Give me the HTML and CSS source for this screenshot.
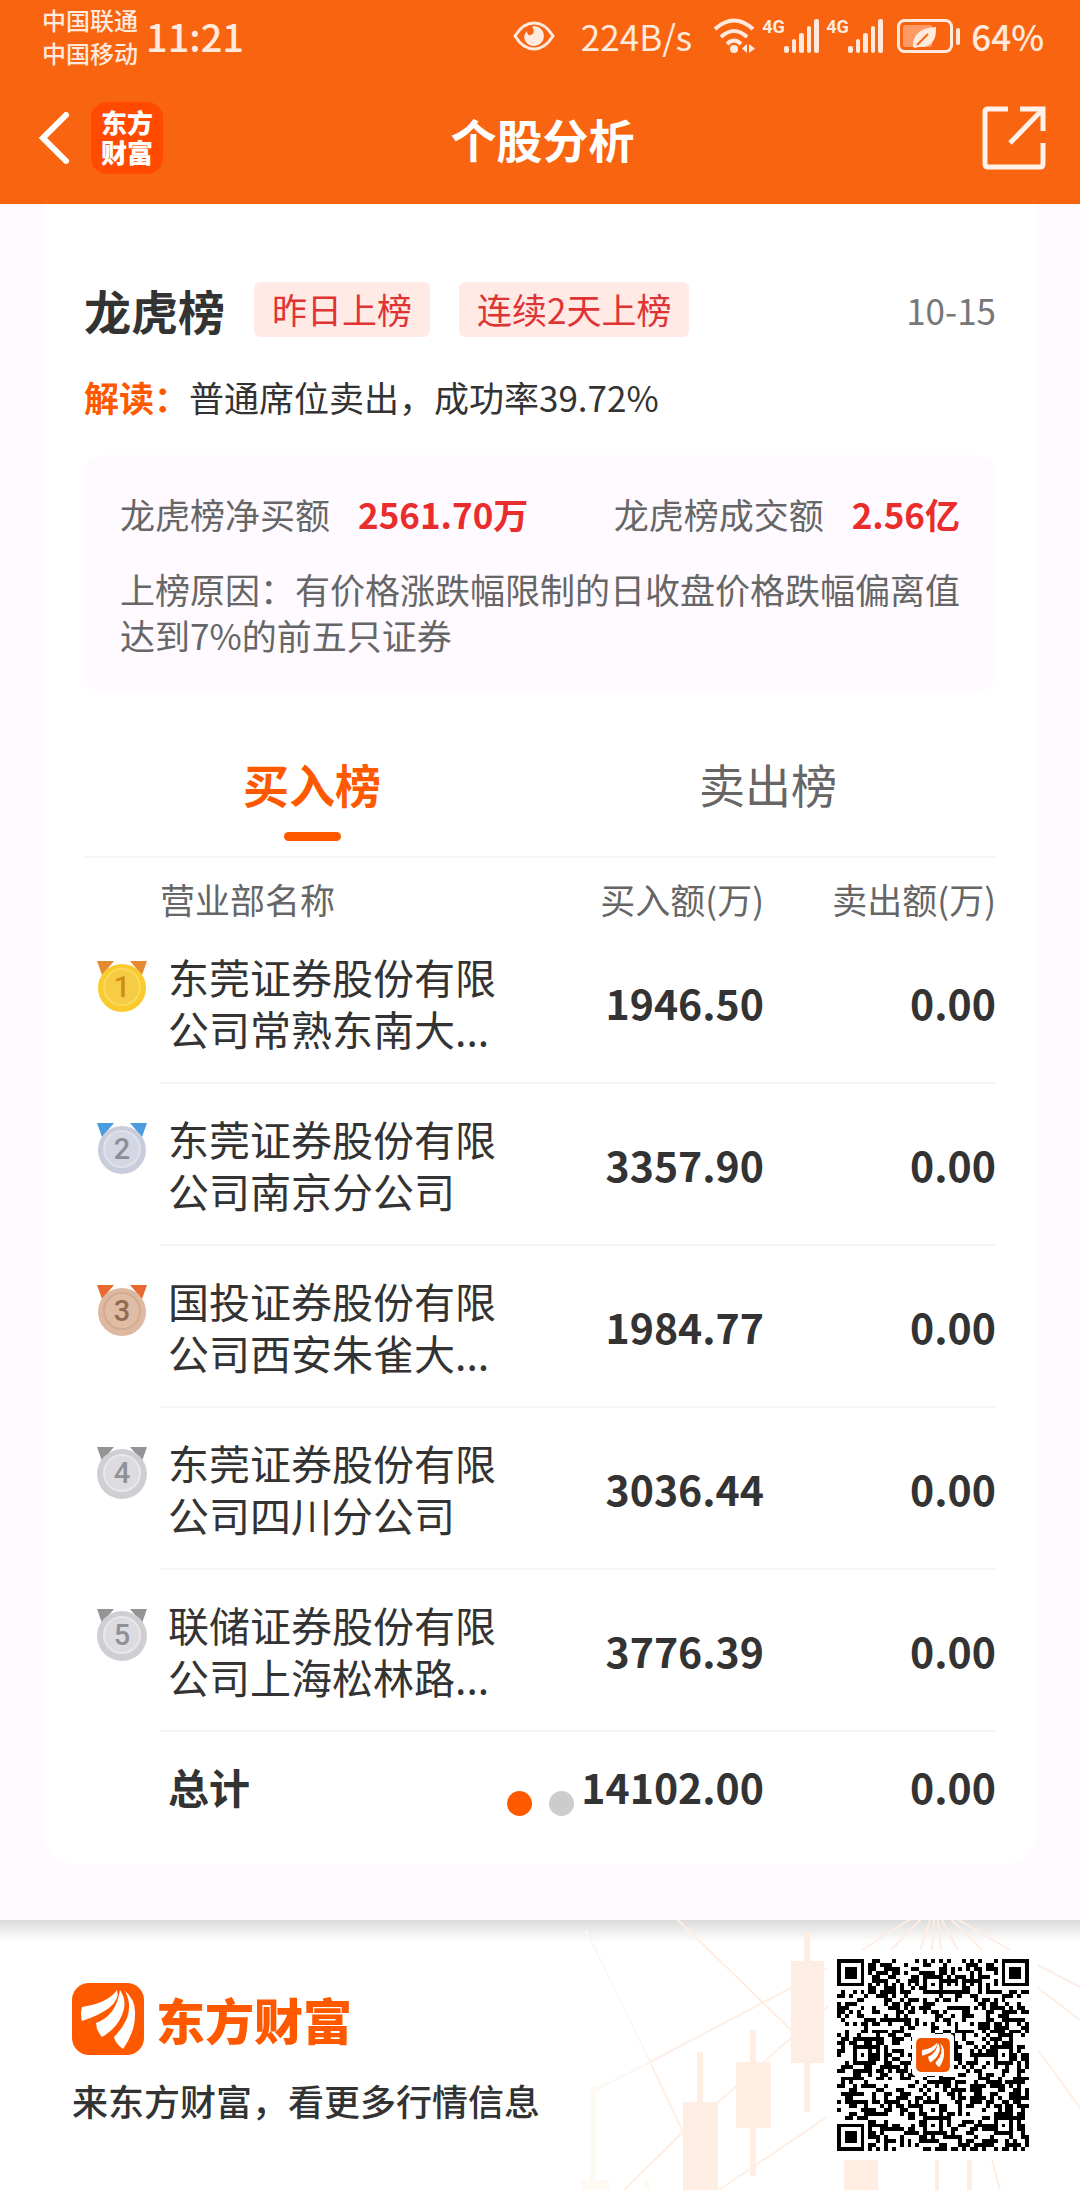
FILE: index.html
```html
<!DOCTYPE html>
<html lang="zh-CN">
  <head>
    <meta charset="UTF-8" />
    <meta name="viewport" content="width=device-width, initial-scale=1.0" />
    <title>个股分析</title>
    <link rel="stylesheet" href="styles.css">
  </head>
  <body>
    <header class="top">
      <div class="status-bar">
        <div class="carriers">
          <span>中国联通</span>
          <span>中国移动</span>
        </div>
        <span class="time">11:21</span>
        <div class="status-icons">
          <svg class="eye" width="42" height="30" viewBox="0 0 42 30">
            <path d="M2 15 Q10 2 21 2 T40 15 Q32 28 21 28 T2 15Z" fill="none" stroke="currentColor" stroke-width="3" />
            <path d="M21 5 A10 10 0 1 1 11 16 Q12 12 14 10 Q14 15 18 14 Q23 11 19 6Z" fill="currentColor" />
          </svg>
          <span class="speed">224B/s</span>
          <svg class="wifi" width="42" height="36" viewBox="0 0 42 36" fill="none" stroke="currentColor" stroke-width="4">
            <path d="M1 11 Q20 -6 39 11" />
            <path d="M7 19 Q20 7 33 19" />
            <path d="M13 26 Q20 19 27 26" />
            <circle cx="20" cy="31" r="4" fill="currentColor" stroke="none" />
            <path d="M33 26v9l-5-4.500zM35 26v9l6-4.500z" fill="currentColor" stroke="none" />
          </svg>
          <div class="signal">
            <span class="net">4G</span>
            <svg width="36" height="34" viewBox="0 0 36 34" fill="currentColor">
              <rect x="0" y="27" width="5" height="7" rx="2" />
              <rect x="8" y="20" width="4" height="14" rx="2" />
              <rect x="15" y="14" width="5" height="20" rx="2" />
              <rect x="23" y="7" width="4" height="27" rx="2" />
              <rect x="30" y="0" width="5" height="34" rx="2" />
            </svg>
          </div>
          <div class="signal">
            <span class="net">4G</span>
            <svg width="36" height="34" viewBox="0 0 36 34" fill="currentColor">
              <rect x="0" y="27" width="5" height="7" rx="2" />
              <rect x="8" y="20" width="4" height="14" rx="2" />
              <rect x="15" y="14" width="5" height="20" rx="2" />
              <rect x="23" y="7" width="4" height="27" rx="2" />
              <rect x="30" y="0" width="5" height="34" rx="2" />
            </svg>
          </div>
          <svg class="battery" width="64" height="34" viewBox="0 0 64 34">
            <rect x="1.500" y="1.500" width="53" height="31" rx="6" fill="none" stroke="currentColor" stroke-width="3" />
            <rect x="6" y="6" width="29" height="22" rx="2" fill="#ff9a66" />
            <path d="M16 27 Q16 9 39 8 Q40 29 22 28 L17 29Z" fill="currentColor" />
            <path d="M20 26 L31 15" stroke="#f96411" stroke-width="2" />
            <rect x="59" y="9" width="4" height="17" rx="2" fill="currentColor" />
          </svg>
          <span class="percent">64%</span>
        </div>
      </div>
      <div class="nav-bar">
        <div class="nav-left">
          <button class="icon-btn back" aria-label="返回">
            <svg width="30" height="52" viewBox="0 0 30 52" fill="none" stroke="#fff" stroke-width="6" stroke-linecap="round">
              <path d="M27 3 L4 26 L27 49" />
            </svg>
          </button>
          <div class="app-badge">东方财富</div>
        </div>
        <h1>个股分析</h1>
        <button class="icon-btn share" aria-label="分享">
          <svg width="64" height="64" viewBox="0 0 64 64" fill="none" stroke="#fff2ea" stroke-width="5">
            <path d="M26 3H6Q3 3 3 6V58Q3 61 6 61H58Q61 61 61 58V37" />
            <path d="M38 3H61V25M60 4L28 37" />
          </svg>
        </button>
      </div>
    </header>

    <main>
      <section class="card">
        <div class="card-title">
          <h2>龙虎榜</h2>
          <span class="tag">昨日上榜</span>
          <span class="tag">连续2天上榜</span>
          <time>10-15</time>
        </div>
        <p class="reading"><strong>解读：</strong>普通席位卖出，成功率39.72%</p>

        <div class="summary">
          <div class="amounts">
            <div>龙虎榜净买额<b>2561.70万</b></div>
            <div>龙虎榜成交额<b>2.56亿</b></div>
          </div>
          <p>上榜原因：有价格涨跌幅限制的日收盘价格跌幅偏离值达到7%的前五只证券</p>
        </div>

        <div class="tabs" role="tablist">
          <button class="tab active" role="tab" aria-selected="true">买入榜</button>
          <button class="tab" role="tab" aria-selected="false">卖出榜</button>
        </div>

        <table>
          <thead>
            <tr>
              <th class="rank"></th>
              <th class="name">营业部名称</th>
              <th class="num">买入额(万)</th>
              <th class="num">卖出额(万)</th>
            </tr>
          </thead>
          <tbody>
            <tr>
              <td class="rank">
                <svg class="medal gold" width="52" height="52" viewBox="0 0 52 52">
                  <path class="ribbon" d="M1 0H18L6 14ZM51 0H34L46 14Z" />
                  <circle class="rim" cx="26" cy="27" r="24" />
                  <circle class="face" cx="26" cy="26" r="18" />
                  <text x="26" y="36">1</text>
                </svg>
              </td>
              <td class="name"><div>东莞证券股份有限公司常熟东南大...</div></td>
              <td class="num">1946.50</td>
              <td class="num">0.00</td>
            </tr>
            <tr>
              <td class="rank">
                <svg class="medal silver" width="52" height="52" viewBox="0 0 52 52">
                  <path class="ribbon" d="M1 0H18L6 14ZM51 0H34L46 14Z" />
                  <circle class="rim" cx="26" cy="27" r="24" />
                  <circle class="face" cx="26" cy="26" r="18" />
                  <text x="26" y="36">2</text>
                </svg>
              </td>
              <td class="name"><div>东莞证券股份有限公司南京分公司</div></td>
              <td class="num">3357.90</td>
              <td class="num">0.00</td>
            </tr>
            <tr>
              <td class="rank">
                <svg class="medal bronze" width="52" height="52" viewBox="0 0 52 52">
                  <path class="ribbon" d="M1 0H18L6 14ZM51 0H34L46 14Z" />
                  <circle class="rim" cx="26" cy="27" r="24" />
                  <circle class="face" cx="26" cy="26" r="18" />
                  <text x="26" y="36">3</text>
                </svg>
              </td>
              <td class="name"><div>国投证券股份有限公司西安朱雀大...</div></td>
              <td class="num">1984.77</td>
              <td class="num">0.00</td>
            </tr>
            <tr>
              <td class="rank">
                <svg class="medal" width="52" height="52" viewBox="0 0 52 52">
                  <path class="ribbon" d="M1 0H18L6 14ZM51 0H34L46 14Z" />
                  <circle class="rim" cx="26" cy="27" r="25" />
                  <circle class="face" cx="26" cy="26" r="18" />
                  <text x="26" y="36">4</text>
                </svg>
              </td>
              <td class="name"><div>东莞证券股份有限公司四川分公司</div></td>
              <td class="num">3036.44</td>
              <td class="num">0.00</td>
            </tr>
            <tr>
              <td class="rank">
                <svg class="medal" width="52" height="52" viewBox="0 0 52 52">
                  <path class="ribbon" d="M1 0H18L6 14ZM51 0H34L46 14Z" />
                  <circle class="rim" cx="26" cy="27" r="25" />
                  <circle class="face" cx="26" cy="26" r="18" />
                  <text x="26" y="36">5</text>
                </svg>
              </td>
              <td class="name"><div>联储证券股份有限公司上海松林路...</div></td>
              <td class="num">3776.39</td>
              <td class="num">0.00</td>
            </tr>
          </tbody>
          <tfoot>
            <tr>
              <td class="rank"></td>
              <td class="name">总计</td>
              <td class="num">14102.00</td>
              <td class="num">0.00</td>
            </tr>
          </tfoot>
        </table>

        <div class="dots">
          <button class="dot on" aria-label="第1页"></button>
          <button class="dot" aria-label="第2页"></button>
        </div>
      </section>
    </main>

    <footer>
      <svg class="backdrop" width="540" height="270" viewBox="0 0 540 270">
        <g fill="none" stroke="#feeee4" stroke-width="2">
          <path d="M138 0L251 110M110 142L143 212M110 142L251 68M84 270L143 212M177 183L251 118M179 270L213 247L287 197" />
          <path stroke="#fff6f0" d="M46 10L110 142M55 170L110 142" />
          <path d="M380 -7L322 30M385 -5L351 30M390 0L380 30M394 0L392 30M398 0L401 30M402 0L418 30M408 -4L442 30M412 -4L470 30" />
          <path d="M284 50L300 42M284 90L300 76M498 45L540 67M498 68L540 100M498 130L540 188M452 240L460 270" />
        </g>
        <path fill="#feede3" d="M264 12h6v180h-6zM251 41h33v102h-33zM157 132h6v60h-6zM143 182h35v88h-35zM395 240h4v30h-4zM427 240h5v30h-5z" />
        <path fill="#ffeee1" d="M210 110h6v146h-6zM196 142h35v66h-35zM304 240h34v30h-34z" />
        <path fill="#fff9f3" d="M50 167h6v103h-6zM41 260h28v10h-28zM104 259h5v11h-5z" />
      </svg>
      <div class="brand">
        <div class="brand-name">
          <svg class="logo" width="72" height="72" viewBox="0 0 72 72">
            <rect width="72" height="72" rx="17" fill="#ff5900" />
            <g id="feather" fill="#fff">
              <path d="M10 24Q36 20 45 7Q48 16 37 25Q28 32 10 38Q8 31 10 24Z" />
              <path d="M48 7Q56 19 50 32Q45 45 30 54Q24 47 24 40Q44 33 48 7Z" />
              <path d="M53 8Q64 17 63 32Q63 49 51 66Q43 60 42 54Q65 31 53 8Z" />
            </g>
          </svg>
          <span>东方财富</span>
        </div>
        <p>来东方财富，看更多行情信息</p>
      </div>
      <div class="qr-box">
        <svg class="qr" width="192" height="192" viewBox="0 0 49 49" shape-rendering="crispEdges" role="img" aria-label="二维码">
          <path id="qrModules" d="" />
        </svg>
        <svg class="qr-logo" width="42" height="42" viewBox="-15 -15 102 102">
          <rect x="-15" y="-15" width="102" height="102" rx="10" fill="#fff" />
          <rect x="-5" y="-5" width="82" height="82" rx="12" fill="#f25700" />
          <use href="#feather" />
        </svg>
      </div>
    </footer>

    <script>
      const size = 49;

      // concentric square pattern: dark ring, light ring, dark centre
      function ring(x, y, cx, cy, outer, inner) {
        const d = Math.max(Math.abs(x - cx), Math.abs(y - cy));
        if (d > outer + (outer === 3 ? 1 : 0)) return null;
        return d === outer || d <= inner;
      }

      function isDark(x, y, rand) {
        for (const [cx, cy] of [[3, 3], [45, 3], [3, 45]]) {
          const v = ring(x, y, cx, cy, 3, 1);
          if (v !== null) return v;
        }
        for (const [cx, cy] of [[24, 6], [6, 24], [42, 24], [24, 42], [42, 42]]) {
          const v = ring(x, y, cx, cy, 2, 0);
          if (v !== null) return v;
        }
        if (x === 6) return y % 2 === 0;
        if (y === 6) return x % 2 === 0;
        return rand < 0.5;
      }

      let seed = 20241;
      let d = "";
      for (let y = 0; y < size; y++) {
        for (let x = 0; x < size; x++) {
          seed = (seed * 16807) % 2147483647;
          if (isDark(x, y, seed / 2147483647)) d += `M${x} ${y}h1v1h-1z`;
        }
      }
      document.getElementById("qrModules").setAttribute("d", d);
    </script>
  </body>
</html>
```
FILE: styles.css
```css
:root {
  --bg: #fefaff;
  --orange: #ff5900;
  --header: #f96411;
  --text: #333;
  --muted: #666;
  --red: #e92c2c;
  --line: #f6f6f7;
}

* {
  box-sizing: border-box;
}

body {
  margin: 0;
  font-family: "Noto Sans CJK SC", sans-serif;
  font-size: 35px;
  line-height: 46px;
  background: var(--bg);
  color: var(--text);
  display: flex;
  flex-direction: column;
  min-height: 100vh;
}

h1,
h2,
p {
  margin: 0;
}

button {
  font-family: inherit;
  border: 0;
  padding: 0;
  background: none;
}

svg {
  display: block;
}

.top {
  background: var(--header);
  color: #ffeadd;
  padding-bottom: 30px;
}

.status-bar {
  display: flex;
  align-items: center;
  height: 72px;
  padding: 0 36px 0 42px;
}

.carriers {
  display: flex;
  flex-direction: column;
  font-size: 24px;
  font-weight: 500;
  line-height: 33px;
}

.time {
  font-size: 38px;
  font-weight: 500;
  margin-left: 8px;
}

.status-icons {
  display: flex;
  align-items: center;
  margin-left: auto;
}

.speed {
  font-size: 35px;
  margin: 0 22px 0 26px;
}

.signal {
  display: flex;
  margin-left: 6px;
}

.net {
  font-family: Roboto, sans-serif;
  font-size: 18px;
  font-weight: 700;
  line-height: 16px;
  width: 22px;
}

.battery {
  margin: 0 10px 0 13px;
}

.percent {
  font-size: 35px;
  font-weight: 500;
}

.nav-bar {
  display: grid;
  grid-template-columns: 1fr auto 1fr;
  align-items: center;
  height: 102px;
  padding: 30px 34px 0 39px;
}

.nav-left {
  display: flex;
  align-items: center;
  gap: 22px;
}

.app-badge {
  width: 72px;
  height: 72px;
  padding: 5px 10px;
  border-radius: 16px;
  background: #ff4a00;
  color: #fff;
  font-size: 26px;
  font-weight: 900;
  line-height: 30px;
}

h1 {
  color: #fff;
  font-size: 46px;
  font-weight: 700;
  line-height: 60px;
}

.share {
  justify-self: end;
}

main {
  flex: 1;
  padding: 0 43px 56px;
}

.card {
  position: relative;
  background: #fff;
  border-radius: 0 0 32px 32px;
  padding: 78px 41px 24px;
}

.card-title {
  display: flex;
  align-items: center;
  height: 55px;
  gap: 29px;
}

h2 {
  font-size: 47px;
  font-weight: 700;
}

.tag {
  padding: 4px 18px 5px;
  border-radius: 6px;
  background: #ffeae6;
  color: #e03434;
}

time {
  margin-left: auto;
  color: #777;
}

.reading {
  margin-top: 37px;
}

.reading strong {
  color: var(--orange);
}

.summary {
  margin-top: 35px;
  padding: 36px 36px 34px;
  border-radius: 18px;
  background: var(--bg);
  color: var(--muted);
}

.amounts {
  display: flex;
  justify-content: space-between;
  margin-bottom: 29px;
}

.amounts b {
  margin-left: 28px;
  color: var(--red);
}

.tabs {
  display: flex;
  margin-top: 63px;
  border-bottom: 2px solid var(--line);
}

.tab {
  flex: 1;
  display: flex;
  flex-direction: column;
  align-items: center;
  padding-bottom: 15px;
  font-size: 46px;
  line-height: 56px;
  color: var(--muted);
}

.tab::after {
  content: "";
  width: 57px;
  height: 9px;
  margin-top: 21px;
  border-radius: 5px;
}

.tab.active {
  color: var(--orange);
  font-weight: 700;
}

.tab.active::after {
  background: var(--orange);
}

table {
  width: 100%;
  border-collapse: separate;
  border-spacing: 0;
}

th {
  height: 64px;
  padding: 18px 0 0;
  font-weight: 400;
  color: var(--muted);
  text-align: left;
}

td {
  height: 162px;
  padding: 0;
  font-size: 41px;
  line-height: 52px;
}

tbody td:not(.rank) {
  border-bottom: 2px solid var(--line);
}

.rank {
  width: 76px;
}

td.rank {
  vertical-align: top;
  padding: 39px 0 0 12px;
}

td.name {
  padding-left: 8px;
}

td.name div {
  width: 8em;
}

.num {
  width: 232px;
  text-align: right;
}

td.num {
  font-weight: 700;
}

tfoot td {
  height: 108px;
  font-weight: 700;
}

.medal text {
  fill: #909096;
  font-family: Roboto, sans-serif;
  font-size: 29px;
  font-weight: 500;
  text-anchor: middle;
}

.medal .ribbon {
  fill: #949497;
}

.medal .rim {
  fill: #cfcfd3;
}

.medal .face {
  fill: #dcdce0;
  stroke: #e8e8eb;
  stroke-width: 2;
}

.gold text {
  fill: #d08d16;
}

.gold .ribbon {
  fill: #e58a30;
}

.gold .rim {
  fill: #fbcb2d;
}

.gold .face {
  fill: #f6cc45;
  stroke: #fbd95c;
}

.silver text {
  fill: #8b8e99;
}

.silver .ribbon {
  fill: #4a9bdf;
}

.silver .rim {
  fill: #c9ccda;
}

.silver .face {
  fill: #d4d7e1;
  stroke: #e0e2ea;
}

.bronze text {
  fill: #8f6a54;
}

.bronze .ribbon {
  fill: #e86a30;
}

.bronze .rim {
  fill: #ddb9a2;
}

.bronze .face {
  fill: #e0bca5;
  stroke: #d2ab93;
}

.dots {
  position: absolute;
  left: 0;
  right: 0;
  bottom: 48px;
  display: flex;
  justify-content: center;
  gap: 17px;
}

.dot {
  width: 25px;
  height: 25px;
  border-radius: 50%;
  background: #ccc;
}

.dot.on {
  background: var(--orange);
}

footer {
  position: relative;
  display: flex;
  justify-content: space-between;
  align-items: flex-start;
  padding: 30px 42px 30px 72px;
  background: linear-gradient(#dcdcdc, #fff 22px);
}

.backdrop {
  position: absolute;
  right: 0;
  top: 0;
}

.brand {
  position: relative;
  padding-top: 33px;
}

.brand-name {
  display: flex;
  align-items: center;
  gap: 12px;
  color: var(--orange);
  font-size: 49px;
  font-weight: 900;
  line-height: 44px;
}

.brand p {
  margin-top: 22px;
  font-size: 36px;
  font-weight: 500;
}

.qr-box {
  position: relative;
  padding: 9px;
  background: #fff;
}

.qr-logo {
  position: absolute;
  left: 84px;
  top: 84px;
}
```
